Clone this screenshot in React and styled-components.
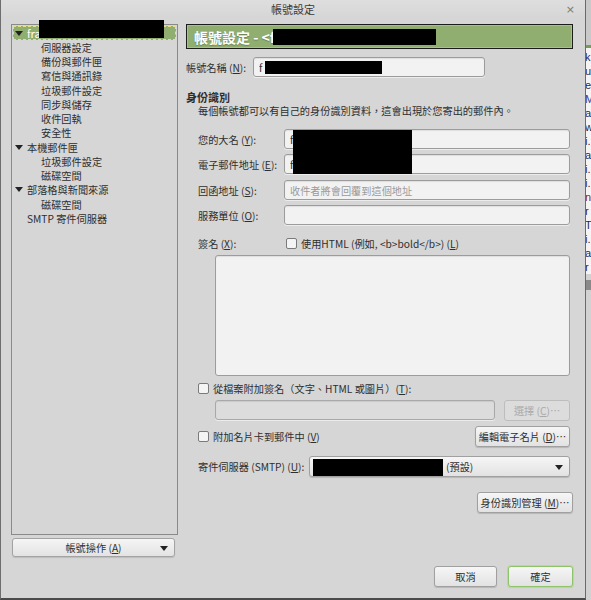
import React from "react";
import styled, { createGlobalStyle, css } from "styled-components";

const GlobalStyle = createGlobalStyle`
  html, body {
    margin: 0;
    padding: 0;
    background: #d6d6d6;
  }
  body {
    font-family: "Noto Sans CJK TC", "Noto Sans", sans-serif;
    font-size: 10.2px;
    color: #2e2e2e;
  }
  * { box-sizing: border-box; }
`;

const Screen = styled.div`
  position: relative;
  display: flex;
  width: 591px;
  height: 600px;
  overflow: hidden;
`;

const Dialog = styled.div`
  width: 586px;
  height: 600px;
  display: flex;
  flex-direction: column;
  background: #d6d6d6;
  border-left: 1px solid #6e6e6e;
  border-right: 1px solid #6a6a6a;
  border-bottom: 2px solid #4a4a4a;
`;

const TitleBar = styled.div`
  height: 18px;
  display: grid;
  grid-template-columns: 1fr auto 1fr;
  align-items: center;
  font-size: 11px;
  color: #3a3a3a;
  background: linear-gradient(#dedede, #d6d6d6);
`;

const Close = styled.span`
  justify-self: end;
  margin-right: 10px;
  font-family: "DejaVu Sans", sans-serif;
  font-size: 11px;
  color: #7a7a7a;
`;

const Body = styled.div`
  display: flex;
  padding: 6px 0 0 10px;
`;

const LeftCol = styled.div`
  width: 167px;
  display: flex;
  flex-direction: column;
`;

const TreePanel = styled.div`
  height: 511px;
  border: 1px solid #8a8a8a;
  padding: 1px;
`;

const TreeRow = styled.div`
  height: 14.25px;
  display: flex;
  align-items: center;
  padding-left: ${(p) => (p.$level ? 28 : 2)}px;
  white-space: nowrap;
  ${(p) =>
    p.$selected &&
    css`
      background: #8fae6f;
      outline: 1px dashed #e6df86;
      outline-offset: -1px;
      color: #fff;
      font-size: 11px;
    `}
`;

const Twisty = styled.span`
  width: 12px;
  flex: none;
  display: flex;
  align-items: center;
  &::before {
    content: "";
    display: ${(p) => (p.$open ? "block" : "none")};
    border-left: 4px solid transparent;
    border-right: 4px solid transparent;
    border-top: 5px solid ${(p) => (p.$light ? "#1d1d1d" : "#222")};
  }
`;

const ActionButton = styled.div`
  margin: 3px 0 0 1px;
  width: 163px;
  height: 19px;
  display: flex;
  align-items: center;
  justify-content: center;
  position: relative;
  border: 1px solid #a3a3a3;
  border-radius: 3px;
  background: linear-gradient(#f5f5f5, #e3e3e3);
  box-shadow: 0 1px 1px rgba(0, 0, 0, 0.12);
`;

const Caret = styled.span`
  position: absolute;
  right: 6px;
  top: 50%;
  margin-top: -2px;
  border-left: 4px solid transparent;
  border-right: 4px solid transparent;
  border-top: 5px solid #222;
`;

const RightCol = styled.div`
  width: 387px;
  margin-left: 8px;
  display: flex;
  flex-direction: column;
`;

const Header = styled.div`
  height: 25px;
  display: flex;
  align-items: center;
  padding-left: 7px;
  background: #8fae6f;
  border: 1px solid #1c1c1c;
  box-shadow: inset 0 0 0 1px #a7c18c;
  color: #fff;
  font-size: 14px;
  font-weight: 700;
  text-shadow: 0 1px 1px rgba(0, 0, 0, 0.25);
`;

const Row = styled.div`
  display: flex;
  align-items: center;
  height: ${(p) => p.$h || 20}px;
  margin-top: ${(p) => p.$mt || 0}px;
  padding-left: ${(p) => p.$indent || 0}px;
  justify-content: ${(p) => (p.$end ? "flex-end" : "flex-start")};
`;

const Label = styled.span`
  width: ${(p) => p.$w}px;
  flex: none;
  white-space: nowrap;
`;

const Input = styled.input`
  width: ${(p) => p.$w}px;
  height: 20px;
  flex: none;
  margin: 0;
  padding: 0 0 0 5px;
  font: inherit;
  color: #2e2e2e;
  background: #f2f2f2;
  border: 1px solid #9c9c9c;
  border-radius: 3px;
  box-shadow: inset 0 1px 1px rgba(0, 0, 0, 0.08), 0 1px 0 #ececec;
  outline: none;
  &::placeholder {
    color: #9a9a9a;
  }
  &:disabled {
    background: #dcdcdc;
    border-color: #a8a8a8;
  }
`;

const Section = styled.div`
  margin-top: ${(p) => p.$mt}px;
  height: 14px;
  line-height: 14px;
  padding-left: ${(p) => p.$indent || 0}px;
  font-weight: ${(p) => (p.$bold ? 700 : 400)};
  font-size: ${(p) => (p.$bold ? "11px" : "inherit")};
  white-space: nowrap;
`;

const Check = styled.span`
  width: 11px;
  height: 11px;
  flex: none;
  margin-right: 4px;
  border: 1px solid #7a7a7a;
  border-radius: 2px;
  background: #f4f4f4;
`;

const TextArea = styled.div`
  margin: 5px 0 0 29px;
  width: 355px;
  height: 121px;
  background: #f2f2f2;
  border: 1px solid #9c9c9c;
  border-radius: 3px;
  box-shadow: inset 0 1px 1px rgba(0, 0, 0, 0.08);
`;

const Button = styled.div`
  width: ${(p) => p.$w}px;
  height: 21px;
  flex: none;
  display: flex;
  align-items: center;
  justify-content: center;
  white-space: nowrap;
  border: 1px solid #a0a0a0;
  border-radius: 3px;
  background: linear-gradient(#f6f6f6, #e2e2e2);
  box-shadow: 0 1px 1px rgba(0, 0, 0, 0.15);
  ${(p) =>
    p.$primary &&
    css`
      border: 1px solid #8fc36a;
      box-shadow: 0 0 0 1px #b6da99, 0 1px 1px rgba(0, 0, 0, 0.15);
    `}
  ${(p) =>
    p.$disabled &&
    css`
      color: #a9a9a9;
      background: #dcdcdc;
      border-color: #bdbdbd;
      box-shadow: none;
    `}
`;

const Select = styled.div`
  width: 261px;
  height: 21px;
  position: relative;
  display: flex;
  align-items: center;
  padding-left: 136px;
  border: 1px solid #a0a0a0;
  border-radius: 3px;
  background: linear-gradient(#f6f6f6, #e2e2e2);
  box-shadow: 0 1px 1px rgba(0, 0, 0, 0.15);
`;

const Footer = styled.div`
  margin-top: 53px;
  display: flex;
  justify-content: flex-end;
  gap: 11px;
`;

const Strip = styled.div`
  width: 5px;
  display: flex;
  flex-direction: column;
  overflow: hidden;
  background: #d2d2d2;
  font-family: "Liberation Sans", sans-serif;
  font-size: 11px;
`;

const StripTop = styled.div`
  height: 48px;
  background: #c9c9c9;
  border-bottom: 3px solid #7a9a5a;
`;

const StripLines = styled.div`
  background: #f4f4f4;
  padding-top: 2px;
  margin-left: -1px;
`;

const StripLine = styled.div`
  height: 14px;
  line-height: 14px;
  color: ${(p) => p.$c || "#1d2a55"};
`;

const StripBand = styled.div`
  height: 10px;
  margin-top: 6px;
  background: #8a8a8a;
`;

const Redact = styled.div`
  position: absolute;
  left: ${(p) => p.$x}px;
  top: ${(p) => p.$y}px;
  width: ${(p) => p.$w}px;
  height: ${(p) => p.$h}px;
  background: #000;
`;

const tree = [
  { label: "fra", level: 0, open: true, selected: true },
  { label: "伺服器設定", level: 1 },
  { label: "備份與郵件匣", level: 1 },
  { label: "寫信與通訊錄", level: 1 },
  { label: "垃圾郵件設定", level: 1 },
  { label: "同步與儲存", level: 1 },
  { label: "收件回執", level: 1 },
  { label: "安全性", level: 1 },
  { label: "本機郵件匣", level: 0, open: true },
  { label: "垃圾郵件設定", level: 1 },
  { label: "磁碟空間", level: 1 },
  { label: "部落格與新聞來源", level: 0, open: true },
  { label: "磁碟空間", level: 1 },
  { label: "SMTP 寄件伺服器", level: 0 },
];

const stripText = [
  ["k"], ["u"], ["e"], ["M", "#1b3d9a"], ["a"], ["w"], ["i."], ["a"], ["i."],
  ["i."], ["n", "#7a2a1a"], ["r"], ["T"], ["i."], ["a"], ["r"],
];

export default function App() {
  return (
    <>
      <GlobalStyle />
      <Screen>
        <Dialog>
          <TitleBar>
            <span />
            <span>帳號設定</span>
            <Close>×</Close>
          </TitleBar>
          <Body>
            <LeftCol>
              <TreePanel>
                {tree.map((t, i) => (
                  <TreeRow key={i} $level={t.level} $selected={t.selected}>
                    {t.level === 0 && <Twisty $open={t.open} />}
                    {t.label}
                  </TreeRow>
                ))}
              </TreePanel>
              <ActionButton>
                帳號操作 (<u>A</u>)
                <Caret />
              </ActionButton>
            </LeftCol>

            <RightCol>
              <Header>帳號設定 - &lt;f</Header>

              <Row $mt={8}>
                <Label $w={67}>
                  帳號名稱 (<u>N</u>):
                </Label>
                <Input $w={232} readOnly value="f" />
              </Row>

              <Section $mt={13} $bold>
                身份識別
              </Section>
              <Section $mt={0} $indent={12}>
                每個帳號都可以有自己的身份識別資料，這會出現於您寄出的郵件內。
              </Section>

              <Row $mt={11} $indent={12}>
                <Label $w={86}>
                  您的大名 (<u>Y</u>):
                </Label>
                <Input $w={286} readOnly value="f" />
              </Row>
              <Row $mt={5} $indent={12}>
                <Label $w={86}>
                  電子郵件地址 (<u>E</u>):
                </Label>
                <Input $w={286} readOnly value="f" />
              </Row>
              <Row $mt={6} $indent={12}>
                <Label $w={86}>
                  回函地址 (<u>S</u>):
                </Label>
                <Input $w={286} readOnly placeholder="收件者將會回覆到這個地址" />
              </Row>
              <Row $mt={5} $indent={12}>
                <Label $w={86}>
                  服務單位 (<u>O</u>):
                </Label>
                <Input $w={286} readOnly />
              </Row>

              <Row $mt={11} $h={14} $indent={12}>
                <Label $w={88}>
                  簽名 (<u>X</u>):
                </Label>
                <Check />
                使用HTML (例如, &lt;b&gt;bold&lt;/b&gt;) (<u>L</u>)
              </Row>
              <TextArea />

              <Row $mt={5} $h={14} $indent={12}>
                <Check />
                從檔案附加簽名（文字、HTML 或圖片）(<u>T</u>):
              </Row>
              <Row $mt={5} $indent={29}>
                <Input $w={280} disabled />
                <Button $w={66} $disabled style={{ marginLeft: 9 }}>
                  選擇 (<u>C</u>)⋯
                </Button>
              </Row>

              <Row $mt={6} $h={21} $indent={12}>
                <Check />
                <Label $w={262}>
                  附加名片卡到郵件中 (<u>V</u>)
                </Label>
                <Button $w={95}>
                  編輯電子名片 (<u>D</u>)⋯
                </Button>
              </Row>

              <Row $mt={9} $h={21} $indent={12}>
                <Label $w={111}>
                  寄件伺服器 (SMTP) (<u>U</u>):
                </Label>
                <Select>
                  (預設)
                  <Caret />
                </Select>
              </Row>

              <Row $mt={15} $h={21} $end>
                <Button $w={96}>
                  身份識別管理 (<u>M</u>)⋯
                </Button>
              </Row>

              <Footer>
                <Button $w={63}>取消</Button>
                <Button $w={65} $primary>
                  確定
                </Button>
              </Footer>
            </RightCol>
          </Body>
        </Dialog>

        <Strip>
          <StripTop />
          <StripLines>
            {stripText.map(([t, c], i) => (
              <StripLine key={i} $c={c}>
                {t}
              </StripLine>
            ))}
          </StripLines>
          <StripBand />
        </Strip>

        <Redact $x={39} $y={20} $w={125} $h={18} />
        <Redact $x={273} $y={29} $w={163} $h={16} />
        <Redact $x={265} $y={61} $w={117} $h={13} />
        <Redact $x={293} $y={130} $w={119} $h={44} />
        <Redact $x={313} $y={459} $w={130} $h={17} />
      </Screen>
    </>
  );
}
